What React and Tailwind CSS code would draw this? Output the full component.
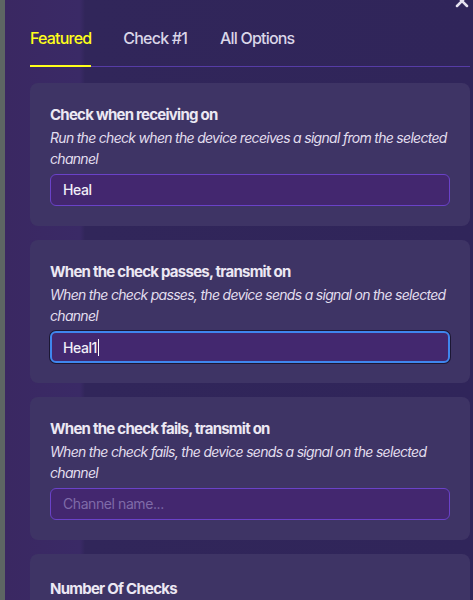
import React from 'react';

const font = { fontFamily: 'Inter, "Noto Sans", sans-serif' };

function OptionCard({ title, description, value, placeholder, focused }) {
  return (
    <div className="rounded-lg bg-[#3e3465] px-5 pt-5 pb-5">
      <h3 className="text-[15px] font-bold leading-6 tracking-[-0.05em] text-[#ece8f3]">{title}</h3>
      <p className="text-sm italic leading-[21px] tracking-[-0.05em] text-[#e2deee]">{description}</p>
      <div
        className={
          focused
            ? 'mt-[5px] flex h-8 items-center rounded-md border-2 border-[#3f86ee] bg-[#43286f] px-[11px] shadow-[0_0_0_1px_#1c1733]'
            : 'mt-[5px] flex h-8 items-center rounded-md border border-[#6a42c8] bg-[#43276f] px-3'
        }
      >
        {value ? (
          <span className="text-sm font-medium tracking-[-0.03em] text-[#f1eef8]">
            {value}
            {focused && <span className="ml-px inline-block h-[17px] w-px translate-y-[3px] bg-white" />}
          </span>
        ) : (
          <span className="text-sm tracking-[-0.03em] text-[#7f6ba8]">{placeholder}</span>
        )}
      </div>
    </div>
  );
}

export default function App() {
  return (
    <div className="flex h-[600px] w-[473px] overflow-hidden bg-[#5b6461]" style={font}>
      <div className="w-[5px] shrink-0 bg-[#5d6663]" />
      <div className="relative flex-1 bg-[linear-gradient(90deg,#3a2862_0px,#3a2a66_75px,#31265a_80px,#30255a_100%)]">
        <svg
          className="absolute right-[4px] top-[-6px]"
          width="14"
          height="14"
          viewBox="0 0 14 14"
          fill="none"
          stroke="#e6e2f0"
          strokeWidth="2.5"
          strokeLinecap="round"
        >
          <path d="M2 2l10 10M12 2L2 12" />
        </svg>

        <div className="ml-[25px] mr-[3px] mt-[28px] flex border-b border-[#563ca6] text-base font-medium tracking-[-0.05em]">
          <div className="-mb-px border-b-2 border-[#ffff1a] pb-[17px] leading-5 text-[#ffff1a]">Featured</div>
          <div className="ml-8 pb-[17px] leading-5 text-[#dad6e8]">Check #1</div>
          <div className="ml-[33px] pb-[17px] leading-5 text-[#dad6e8]">All Options</div>
        </div>

        <div className="ml-[25px] mr-[3px] mt-4 flex flex-col gap-[14px]">
          <OptionCard
            title="Check when receiving on"
            description="Run the check when the device receives a signal from the selected channel"
            value="Heal"
          />
          <OptionCard
            title="When the check passes, transmit on"
            description="When the check passes, the device sends a signal on the selected channel"
            value="Heal1"
            focused
          />
          <OptionCard
            title="When the check fails, transmit on"
            description="When the check fails, the device sends a signal on the selected channel"
            placeholder="Channel name..."
          />
          <div className="h-[120px] rounded-lg bg-[#3e3465] px-5 pt-5">
            <h3 className="mt-[3px] text-[15px] font-bold leading-6 tracking-[-0.05em] text-[#ece8f3]">Number Of Checks</h3>
          </div>
        </div>
      </div>
    </div>
  );
}
